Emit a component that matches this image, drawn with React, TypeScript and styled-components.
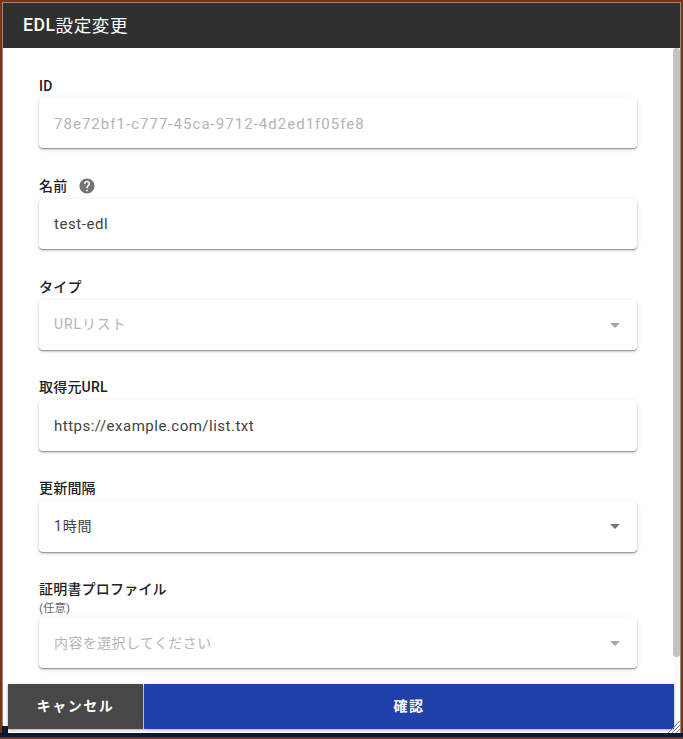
import { FunctionComponent } from "react";
import styled, { createGlobalStyle } from "styled-components";
import { MdArrowDropDown, MdHelp } from "react-icons/md";

interface IFieldProps {
  label: string;
  latinLabel?: boolean;
  hint?: string;
  help?: boolean;
  value: string;
  muted?: boolean;
  select?: boolean;
  jp?: boolean;
  spacing?: number;
}

const Field: FunctionComponent<IFieldProps> = ({ label, latinLabel, hint, help, value, muted, select, jp, spacing }) => {
  return (
    <FieldRow>
      <Label $latin={latinLabel}>
        {label}
        {help && <HelpIcon />}
      </Label>
      {hint && <Hint>{hint}</Hint>}
      <Card>
        <Value $muted={muted} $jp={jp} $spacing={spacing}>
          {value}
        </Value>
        {select && <Arrow $muted={muted} />}
      </Card>
    </FieldRow>
  );
};

const App: FunctionComponent = () => {
  return (
    <>
      <GlobalStyle />
      <Page>
        <Dialog>
          <Header>
            <strong>EDL</strong>設定変更
          </Header>
          <Middle>
            <Form>
              <Field label="ID" latinLabel value="78e72bf1-c777-45ca-9712-4d2ed1f05fe8" muted spacing={1.03} />
              <Field label="名前" value="test-edl" help spacing={0.55} />
              <Field label="タイプ" value="URLリスト" muted select jp spacing={0.9} />
              <Field label="取得元URL" value="https://example.com/list.txt" spacing={0.5} />
              <Field label="更新間隔" value="1時間" select jp spacing={0.8} />
              <Field label="証明書プロファイル" hint="(任意)" value="内容を選択してください" muted select jp />
            </Form>
            <ScrollTrack>
              <ScrollThumb />
            </ScrollTrack>
          </Middle>
          <Footer>
            <CancelButton>キャンセル</CancelButton>
            <ConfirmButton>確認</ConfirmButton>
          </Footer>
          <CornerNotch />
          <ResizeHandle viewBox="0 0 12 12">
            <path d="M0 12L12 0M4 12L12 4M8 12L12 8" stroke="#808080" strokeWidth="1" fill="none" />
          </ResizeHandle>
        </Dialog>
      </Page>
    </>
  );
};

export default App;

const GlobalStyle = createGlobalStyle`
  html, body {
    margin: 0;
    padding: 0;
    overflow: hidden;
  }
  body {
    font-family: Roboto, "Noto Sans CJK JP", sans-serif;
  }
`;

const Page = styled.div`
  width: 683px;
  height: 739px;
  box-sizing: border-box;
  padding: 2px 2px 2px 2px;
  background: linear-gradient(to bottom, #7a3315 733px, #0a1836 733px, #0a1836 737px, #7a3315 737px);
`;

const Dialog = styled.div`
  position: relative;
  width: 679px;
  height: 731px;
  box-sizing: border-box;
  border-top: 1px solid #8d8d8d;
  border-right: 1px solid #8d8d8d;
  border-left: 1px solid #8d8d8d;
  display: flex;
  flex-direction: column;
  background: #ffffff;
`;

const Header = styled.div`
  height: 45px;
  flex-shrink: 0;
  box-sizing: border-box;
  padding: 0 20px 2px;
  display: flex;
  align-items: center;
  background: #303030;
  color: #ffffff;
  font-size: 17.6px;
  letter-spacing: 0.55px;

  strong {
    font-weight: 500;
  }
`;

const Middle = styled.div`
  height: 636px;
  flex-shrink: 0;
  display: flex;
  overflow: hidden;
`;

const Form = styled.div`
  flex: 1;
  box-sizing: border-box;
  padding: 30px 36px 0 36px;
`;

const FieldRow = styled.div`
  margin-bottom: 30.4px;
`;

const Label = styled.div<{ $latin?: boolean }>`
  height: 20px;
  box-sizing: border-box;
  padding-bottom: ${({ $latin }) => ($latin ? "4px" : "6px")};
  line-height: 16px;
  display: flex;
  align-items: center;
  font-size: 14px;
  font-weight: 500;
  letter-spacing: 0.2px;
  color: #212121;
`;

const HelpIcon = styled(MdHelp)`
  width: 18px;
  height: 18px;
  margin-left: 11px;
  color: #757575;
`;

const Hint = styled.div`
  height: 16px;
  margin-top: -2px;
  margin-bottom: 2px;
  line-height: 16px;
  font-size: 11.5px;
  color: #666666;
`;

const Card = styled.div`
  height: 50.4px;
  box-sizing: border-box;
  padding: 0 10px 0 15px;
  display: flex;
  align-items: center;
  justify-content: space-between;
  border-radius: 4px;
  background: #ffffff;
  box-shadow: 0 1px 5px rgba(0, 0, 0, 0.12), 0 2px 2px rgba(0, 0, 0, 0.1), 0 1px 1px rgba(0, 0, 0, 0.3);
`;

const Value = styled.span<{ $muted?: boolean; $jp?: boolean; $spacing?: number }>`
  font-size: ${({ $jp }) => ($jp ? "14px" : "15px")};
  letter-spacing: ${({ $spacing }) => $spacing ?? 0.4}px;
  padding-bottom: ${({ $jp }) => ($jp ? "3px" : "0")};
  padding-top: ${({ $jp }) => ($jp ? "0" : "1px")};
  color: ${({ $muted }) => ($muted ? "#b4b4b4" : "#424242")};
`;

const Arrow = styled(MdArrowDropDown)<{ $muted?: boolean }>`
  width: 24px;
  height: 24px;
  color: ${({ $muted }) => ($muted ? "#a5a5a5" : "#757575")};
`;

const ScrollTrack = styled.div`
  width: 7px;
  flex-shrink: 0;
  background: #fbfbfb;
  border-radius: 4px;
`;

const ScrollThumb = styled.div`
  height: 609px;
  background: #c2c2c2;
  border-radius: 4px;
`;

const Footer = styled.div`
  flex: 1;
  box-sizing: border-box;
  padding: 0 6px 4px 5px;
  display: flex;
  gap: 1px;
`;

const FooterButton = styled.button`
  height: 45px;
  padding: 0 0 3px;
  border: none;
  color: #ffffff;
  font-family: inherit;
  font-size: 14px;
  font-weight: 700;
  letter-spacing: 1.5px;
  box-shadow: 0 1px 3px rgba(0, 0, 0, 0.35);
`;

const CancelButton = styled(FooterButton)`
  width: 135px;
  background: #484848;
`;

const ConfirmButton = styled(FooterButton)`
  flex: 1;
  background: #1f41a9;
`;

const CornerNotch = styled.div`
  position: absolute;
  left: -1px;
  bottom: 0;
  width: 6px;
  height: 7px;
  background: #0a1836;
`;

const ResizeHandle = styled.svg`
  position: absolute;
  right: 0;
  bottom: 0;
  width: 12px;
  height: 12px;
`;
